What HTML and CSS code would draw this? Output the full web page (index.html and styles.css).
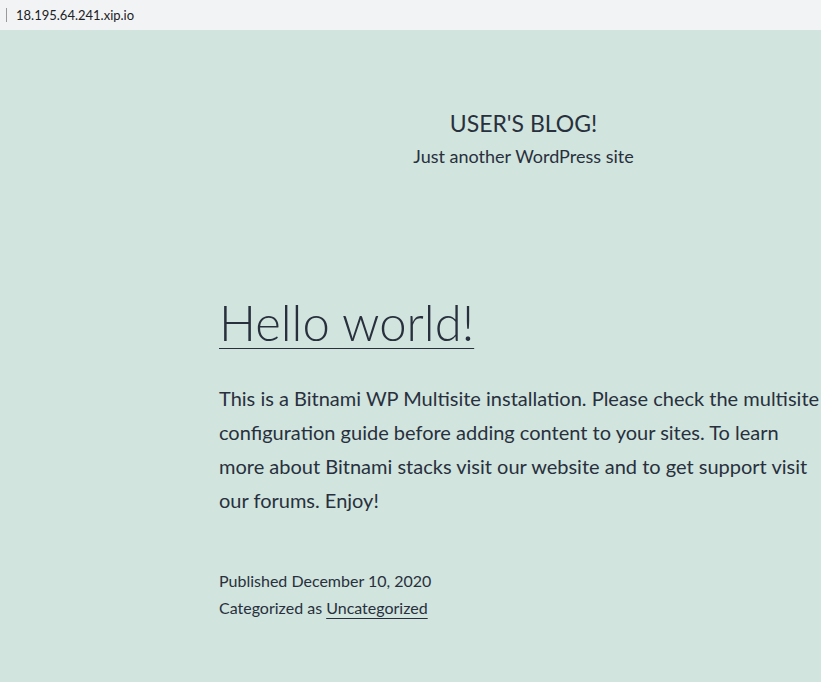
FILE: index.html
```html
<!DOCTYPE html>
<html lang="en">
<head>
<meta charset="utf-8">
<title>User's Blog!</title>
<link rel="stylesheet" href="styles.css">
</head>
<body>
<div class="urlbar">
  <span class="caret"></span>
  <span class="url">18.195.64.241.xip.io</span>
</div>
<div class="page">
  <header class="site-header">
    <p class="site-title">USER'S BLOG!</p>
    <p class="site-desc">Just another WordPress site</p>
  </header>
  <main class="content">
    <h1 class="entry-title"><a href="#">Hello world!</a></h1>
    <p class="entry-text">This is a Bitnami WP Multisite installation. Please check the multisite configuration guide before adding content to your sites. To learn more about Bitnami stacks visit our website and to get support visit our forums. Enjoy!</p>
    <footer class="entry-meta">
      <div class="meta-line">Published December 10, 2020</div>
      <div class="meta-line">Categorized as <a href="#">Uncategorized</a></div>
    </footer>
  </main>
</div>
</body>
</html>
```

FILE: styles.css
```css
html, body {
  margin: 0;
  padding: 0;
}
body {
  background: #d1e4dd;
  color: #28303d;
  font-family: Lato, "Noto Sans", sans-serif;
  overflow: hidden;
  height: 682px;
}
.urlbar {
  height: 30px;
  background: #f1f3f4;
  display: flex;
  align-items: center;
  gap: 9px;
  padding-left: 6px;
  box-sizing: border-box;
}
.caret {
  width: 1px;
  height: 14px;
  background: #9a9a9a;
}
.url {
  font-size: 13px;
  color: #202124;
}
.page {
  padding-bottom: 40px;
}
.site-header {
  padding-left: 226px;
  padding-top: 78px;
  text-align: center;
}
.site-title {
  margin: 0;
  font-size: 23px;
  line-height: 31px;
}
.site-desc {
  margin: 5px 0 0;
  font-size: 18px;
  line-height: 1.4;
}
.content {
  padding-left: 219px;
  width: 610px;
  padding-top: 122px;
}
.entry-title {
  margin: 0;
  font-size: 49px;
  font-weight: 300;
  line-height: 62px;
}
.entry-title a,
.entry-meta a {
  color: #28303d;
  text-decoration: underline;
  text-decoration-thickness: 1px;
  text-underline-offset: 7px;
}
.entry-meta a {
  text-underline-offset: 4px;
}
.entry-text {
  margin: 28px 0 0;
  font-size: 20px;
  line-height: 34px;
}
.entry-meta {
  margin-top: 50px;
  font-size: 16px;
  line-height: 27px;
}
```
